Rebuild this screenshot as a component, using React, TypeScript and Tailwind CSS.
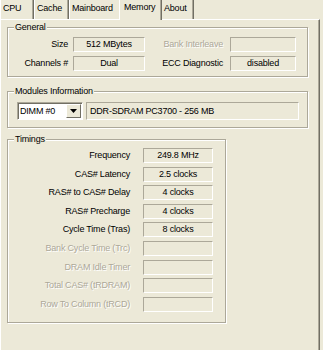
import type { ReactNode } from "react"

const timings = [
  { label: "Frequency", value: "249.8 MHz" },
  { label: "CAS# Latency", value: "2.5 clocks" },
  { label: "RAS# to CAS# Delay", value: "4 clocks" },
  { label: "RAS# Precharge", value: "4 clocks" },
  { label: "Cycle Time (Tras)", value: "8 clocks" },
  { label: "Bank Cycle Time (Trc)", value: "", disabled: true },
  { label: "DRAM Idle Timer", value: "", disabled: true },
  { label: "Total CAS# (tRDRAM)", value: "", disabled: true },
  { label: "Row To Column (tRCD)", value: "", disabled: true },
]

// sunken static frame, classic style
const sunken =
  "border border-t-[#aca899] border-l-[#aca899] border-b-white border-r-white"
const disabledText = "text-[#aca899] [text-shadow:1px_1px_0_#fff]"

function Field({ value, className = "" }: { value?: string; className?: string }) {
  return (
    <div className={`flex h-[15px] items-center justify-center leading-[13px] ${sunken} ${className}`}>
      {value}
    </div>
  )
}

function Group({
  title,
  className = "",
  children,
}: {
  title: string
  className?: string
  children: ReactNode
}) {
  return (
    <div
      className={`relative shrink-0 border border-[#aca899] shadow-[inset_1px_1px_0_#fff,1px_1px_0_#fff] ${className}`}
    >
      <span className="absolute -top-[6px] left-[6px] bg-[#ece9d8] px-px leading-[11px]">
        {title}
      </span>
      {children}
    </div>
  )
}

function Tab({
  label,
  selected = false,
  className = "",
}: {
  label: string
  selected?: boolean
  className?: string
}) {
  return (
    <div
      className={`shrink-0 border-l border-r border-l-white border-r-[#716f64] bg-[#ece9d8] leading-[11px] shadow-[inset_-1px_0_0_#aca899] ${
        selected ? "relative z-10 -mx-[2px] h-[20px] pt-[2px]" : "h-[19px] pt-[3px]"
      } ${className}`}
    >
      {label}
    </div>
  )
}

export default function App() {
  return (
    <div className="flex h-[350px] w-[323px] flex-col overflow-hidden bg-[#ece9d8] font-['Liberation_Sans',Arial,sans-serif] text-[9px] tracking-[-0.2px] text-black">
      {/* tab strip */}
      <div className="flex h-[19px] shrink-0 items-start">
        <Tab label="CPU" className="w-[34px] pl-[2px]" />
        <Tab label="Cache" className="w-[35px] pl-[2px]" />
        <Tab label="Mainboard" className="w-[52px] pl-[2px]" />
        <Tab label="Memory" selected className="w-[43px] pl-[4px]" />
        <Tab label="About" className="w-[34px] pl-[3px]" />
      </div>

      {/* tab page */}
      <div className="flex w-[320px] flex-1 flex-col border-l border-r border-t border-l-white border-r-[#716f64] border-t-white px-[6px] pt-[7px] shadow-[inset_-1px_0_0_#aca899]">
        <Group
          title="General"
          className="grid h-[50px] w-[301px] grid-cols-[65px_72px_85px_66px] content-start gap-y-[4px] pt-[9px]"
        >
          <div className="pr-[5px] text-right leading-[15px]">Size</div>
          <Field value="512 MBytes" />
          <div className={`pr-[7px] text-right leading-[15px] ${disabledText}`}>Bank Interleave</div>
          <Field />
          <div className="pr-[5px] text-right leading-[15px]">Channels #</div>
          <Field value="Dual" />
          <div className="pr-[7px] text-right leading-[15px]">ECC Diagnostic</div>
          <Field value="disabled" />
        </Group>

        <Group
          title="Modules Information"
          className="mt-[14px] flex h-[37px] w-[301px] items-start gap-[3px] pl-[9px] pt-[10px]"
        >
          <div
            className={`flex h-[18px] w-[66px] items-center bg-white shadow-[inset_1px_1px_0_#716f64] ${sunken}`}
          >
            <span className="flex-1 pl-[2px] leading-[14px]">DIMM #0</span>
            <div className="mr-px flex h-[14px] w-[15px] items-center justify-center border border-b-[#716f64] border-l-white border-r-[#716f64] border-t-white bg-[#ece9d8]">
              <svg width="7" height="4" viewBox="0 0 7 4">
                <path d="M0 0h7L3.5 4z" fill="#000" />
              </svg>
            </div>
          </div>
          <div className={`flex h-[18px] w-[213px] items-center pl-[3px] leading-[14px] ${sunken}`}>
            DDR-SDRAM PC3700 - 256 MB
          </div>
        </Group>

        <Group
          title="Timings"
          className="mt-[11px] grid h-[184px] w-[219px] grid-cols-[135px_70px] content-start gap-y-[3.6px] pt-[8px]"
        >
          {timings.map((t) => (
            <div key={t.label} className="contents">
              <div
                className={`pr-[13px] text-right leading-[15px] ${t.disabled ? disabledText : ""}`}
              >
                {t.label}
              </div>
              <Field value={t.value} />
            </div>
          ))}
        </Group>
      </div>
    </div>
  )
}
